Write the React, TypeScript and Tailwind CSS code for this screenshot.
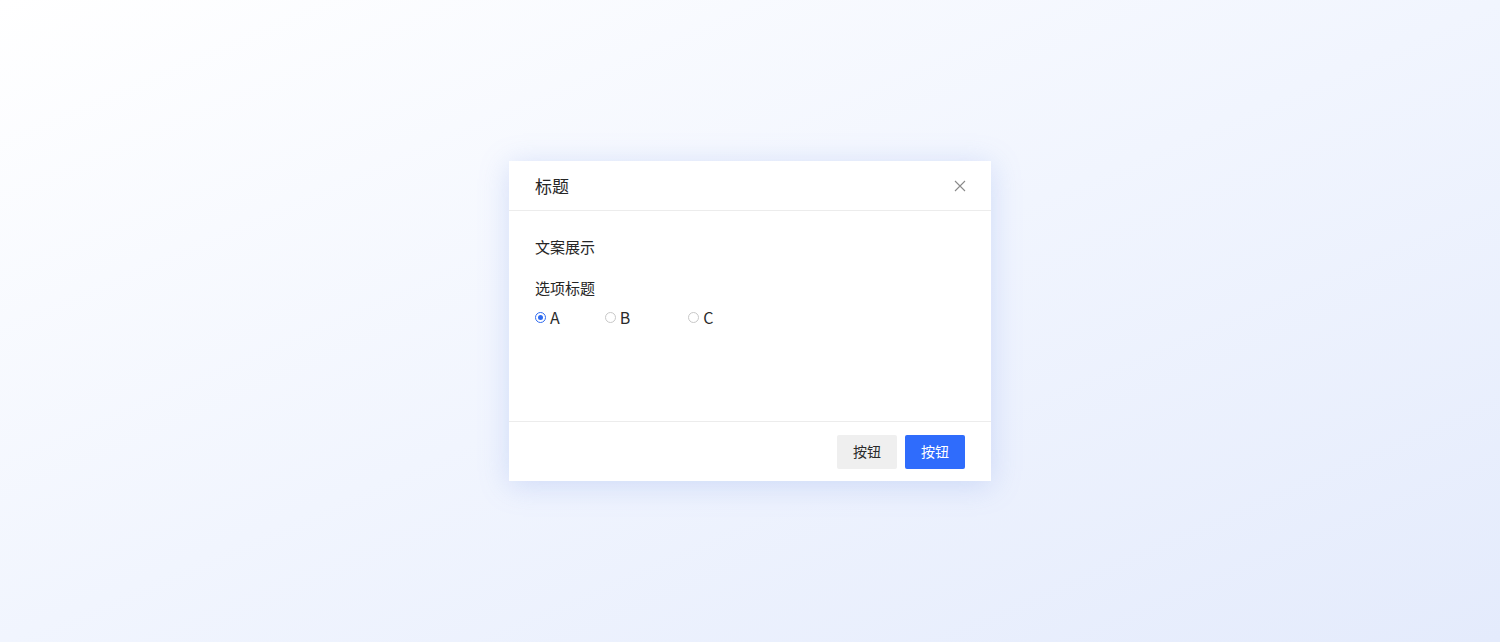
import type { FC } from "react";

const options = [
  { label: "A", checked: true, className: "mr-[45px]" },
  { label: "B", checked: false, className: "mr-[58px]" },
  { label: "C", checked: false, className: "" },
];

const Radio: FC<{ label: string; checked: boolean; className: string }> = ({
  label,
  checked,
  className,
}) => (
  <label className={`flex items-center gap-[4px] ${className}`}>
    <span
      className={`flex h-[11px] w-[11px] items-center justify-center rounded-full border ${
        checked ? "border-[#2f6bf0]" : "border-[#c8c8c8]"
      }`}
    >
      {checked && <span className="h-[5px] w-[5px] rounded-full bg-[#2f6bf0]" />}
    </span>
    <span className="text-[16px] leading-[22px] text-[#2b2b2b]">{label}</span>
  </label>
);

const App: FC = () => {
  return (
    <div
      className="flex h-[642px] w-full items-center justify-center bg-gradient-to-br from-[#ffffff] via-[#f1f5fe] to-[#e4ebfc]"
      style={{ fontFamily: '"Noto Sans CJK SC", "Noto Sans", sans-serif' }}
    >
      <div className="flex h-[320px] w-[482px] flex-col bg-white shadow-[0_4px_28px_rgba(120,150,230,0.28)]">
        <div className="flex h-[50px] items-center justify-between border-b border-[#ececec] pl-[26px] pr-[25px]">
          <h2 className="text-[17px] leading-[24px] text-[#262626]">标题</h2>
          <button type="button" className="text-[#8a8a8a]">
            <svg width="12" height="12" viewBox="0 0 12 12" fill="none">
              <path d="M1 1L11 11M11 1L1 11" stroke="currentColor" strokeWidth="1.1" />
            </svg>
          </button>
        </div>
        <div className="flex-1 px-[26px] pt-[25px]">
          <p className="text-[15px] leading-[22px] text-[#262626]">文案展示</p>
          <p className="mt-[19px] text-[15px] leading-[22px] text-[#262626]">选项标题</p>
          <div className="mt-[7px] flex items-center">
            {options.map((o) => (
              <Radio key={o.label} {...o} />
            ))}
          </div>
        </div>
        <div className="flex h-[60px] items-center justify-end gap-[8px] border-t border-[#ececec] pr-[26px]">
          <button
            type="button"
            className="h-[34px] w-[60px] rounded-[2px] bg-[#efefef] text-[14px] text-[#2b2b2b]"
          >
            按钮
          </button>
          <button
            type="button"
            className="h-[34px] w-[60px] rounded-[2px] bg-[#2f6cfc] text-[14px] text-white"
          >
            按钮
          </button>
        </div>
      </div>
    </div>
  );
};

export default App;
